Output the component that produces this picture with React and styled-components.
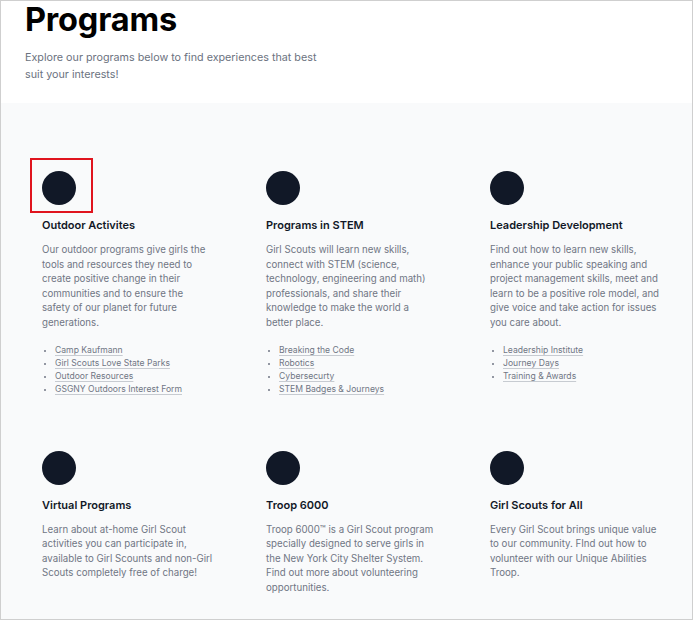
import React from "react";
import styled, { createGlobalStyle } from "styled-components";

const Global = createGlobalStyle`
  html, body { margin: 0; padding: 0; background: #ffffff; }
  body { font-family: Inter, "Noto Sans", sans-serif; -webkit-font-smoothing: antialiased; }
  * { box-sizing: border-box; }
`;

const Frame = styled.div`
  width: 693px;
  height: 620px;
  border: 1px solid #cfcfcf;
  overflow: hidden;
  background: #ffffff;
`;

const Header = styled.header`
  padding: 3px 24px 0 24px;
  height: 102px;
`;

const Title = styled.h1`
  margin: 0;
  font-size: 32.5px;
  line-height: 32px;
  font-weight: 700;
  color: #000000;
  letter-spacing: -0.2px;
`;

const Lead = styled.p`
  margin: 13px 0 0 0;
  max-width: 310px;
  font-size: 10.75px;
  line-height: 17px;
  color: #6b7280;
`;

const Section = styled.section`
  background: #f9fafb;
  padding: 68px 41px 40px 41px;
`;

const Grid = styled.div`
  display: grid;
  grid-template-columns: repeat(3, 172px);
  column-gap: 52px;
  row-gap: 55px;
`;

const Card = styled.div`
  position: relative;
`;

const Icon = styled.div`
  width: 34px;
  height: 34px;
  border-radius: 50%;
  background: #111827;
`;

const Highlight = styled.div`
  position: absolute;
  left: -12px;
  top: -13px;
  width: 63px;
  height: 55px;
  border: 2px solid #e0141e;
  pointer-events: none;
`;

const CardTitle = styled.h3`
  margin: 13px 0 0 0;
  font-size: 11px;
  line-height: 14px;
  font-weight: 600;
  color: #111827;
`;

const Desc = styled.p`
  margin: 11px 0 0 0;
  font-size: 9.7px;
  line-height: 14.6px;
  color: #707684;
`;

const Links = styled.ul`
  margin: 13px 0 0 0;
  padding-left: 13px;
  list-style: disc;
  color: #707684;
  font-size: 8.6px;
  line-height: 13px;
`;

const LinkItem = styled.li`
  &::marker { font-size: 7px; }
`;

const Link = styled.a`
  color: #707684;
  text-decoration: underline;
  text-decoration-color: #c7cbd1;
  text-underline-offset: 2px;
`;

const programs = [
  {
    title: "Outdoor Activites",
    desc: "Our outdoor programs give girls the tools and resources they need to create positive change in their communities and to ensure the safety of our planet for future generations.",
    links: ["Camp Kaufmann", "Girl Scouts Love State Parks", "Outdoor Resources", "GSGNY Outdoors Interest Form"],
    highlight: true,
  },
  {
    title: "Programs in STEM",
    desc: "Girl Scouts will learn new skills, connect with STEM (science, technology, engineering and math) professionals, and share their knowledge to make the world a better place.",
    links: ["Breaking the Code", "Robotics", "Cybersecurty", "STEM Badges & Journeys"],
  },
  {
    title: "Leadership Development",
    desc: "Find out how to learn new skills, enhance your public speaking and project management skills, meet and learn to be a positive role model, and give voice and take action for issues you care about.",
    links: ["Leadership Institute", "Journey Days", "Training & Awards"],
  },
  {
    title: "Virtual Programs",
    desc: "Learn about at-home Girl Scout activities you can participate in, available to Girl Scounts and non-Girl Scouts completely free of charge!",
  },
  {
    title: "Troop 6000",
    desc: "Troop 6000™ is a Girl Scout program specially designed to serve girls in the New York City Shelter System. Find out more about volunteering opportunities.",
  },
  {
    title: "Girl Scouts for All",
    desc: "Every Girl Scout brings unique value to our community. FInd out how to volunteer with our Unique Abilities Troop.",
  },
];

export default function App() {
  return (
    <>
      <Global />
      <Frame>
        <Header>
          <Title>Programs</Title>
          <Lead>Explore our programs below to find experiences that best suit your interests!</Lead>
        </Header>
        <Section>
          <Grid>
            {programs.map((p) => (
              <Card key={p.title}>
                {p.highlight && <Highlight />}
                <Icon />
                <CardTitle>{p.title}</CardTitle>
                <Desc>{p.desc}</Desc>
                {p.links && (
                  <Links>
                    {p.links.map((l) => (
                      <LinkItem key={l}>
                        <Link href="#">{l}</Link>
                      </LinkItem>
                    ))}
                  </Links>
                )}
              </Card>
            ))}
          </Grid>
        </Section>
      </Frame>
    </>
  );
}
